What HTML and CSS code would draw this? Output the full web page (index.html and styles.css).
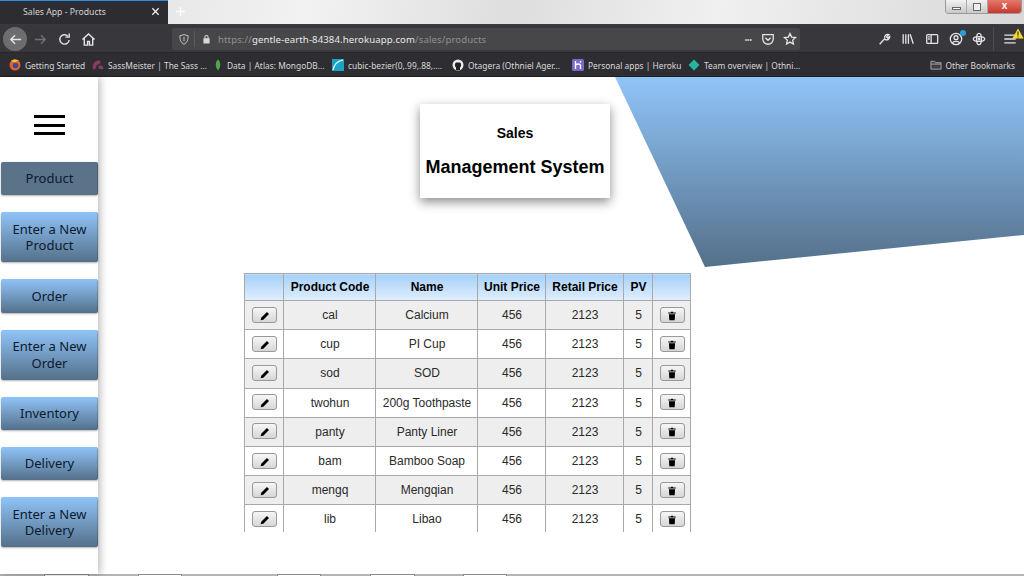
FILE: index.html
```html
<!DOCTYPE html>
<html lang="en">
<head>
<meta charset="utf-8">
<title>Sales App - Products</title>
<link rel="stylesheet" href="styles.css">
</head>
<body>
<svg class="defs" width="0" height="0">
  <symbol id="pencil" viewBox="0 0 12 12"><path d="M8.300 1.200l2.500 2.500-6.800 6.800L.8 11.200l.7-3.200z"/></symbol>
  <symbol id="trash" viewBox="0 0 12 12"><path d="M1.500 1.800h3l.5-.8h2l.5.8h3v1.300h-9zM2.300 3.800h7.400l-.5 7.400H2.800z"/></symbol>
</svg>
<header class="titlebar">
  <div class="tab"><span class="tab-title">Sales App - Products</span>
    <svg class="tab-close" viewBox="0 0 10 10"><path d="M1.500 1.500l7 7M8.500 1.500l-7 7"/></svg>
  </div>
  <svg class="new-tab" viewBox="0 0 12 12"><path d="M6 1v10M1 6h10"/></svg>
  <div class="win-controls">
    <span class="win-btn win-min"><i class="min-glyph"></i></span>
    <span class="win-btn win-max"><i class="max-glyph"></i></span>
    <span class="win-btn win-close">x</span>
  </div>
</header>
<nav class="toolbar">
  <span class="back"><svg viewBox="0 0 16 16" class="ico"><path d="M14 8H3M7.500 3.500L3 8l4.500 4.500"/></svg></span>
  <svg viewBox="0 0 16 16" class="ico ico-dim fwd"><path d="M2 8h11M8.500 3.500L13 8l-4.500 4.500"/></svg>
  <svg viewBox="0 0 16 16" class="ico reload"><path d="M13 8.500A5 5 0 1 1 11.500 4.300M13 1.500v4h-4"/></svg>
  <svg viewBox="0 0 16 16" class="ico home"><path d="M1.500 8L8 2l6.500 6M3.500 7v7h3.500v-4h2v4h3.500V7"/></svg>
  <div class="urlbar">
    <svg viewBox="0 0 16 16" class="ico shield"><path d="M8 1.500l5.500 1.500c0 5-1 9-5.500 11.500C3.500 12 2.500 8 2.500 3zM8 4.500v6"/></svg>
    <span class="url-sep"></span>
    <svg viewBox="0 0 16 16" class="lock"><path d="M5 7V5a3 3 0 0 1 6 0v2h1.500v7.500h-9V7zM6.500 7h3V5a1.500 1.500 0 0 0-3 0z" fill-rule="evenodd"/></svg>
    <span class="url"><span class="url-dim">https://</span>gentle-earth-84384.herokuapp.com<span class="url-dim">/sales/products</span></span>
    <span class="url-dots">•••</span>
    <svg viewBox="0 0 16 16" class="ico pocket"><path d="M2 3h12v5a6 6 0 0 1-12 0zM5 6.500l3 3 3-3"/></svg>
    <svg viewBox="0 0 16 16" class="ico star"><path d="M8 1.800l1.900 4 4.400.5-3.200 3 .8 4.400L8 11.500l-3.900 2.200.8-4.400-3.200-3 4.400-.5z"/></svg>
  </div>
  <div class="tools">
    <svg viewBox="0 0 16 16" class="ico wrench"><path d="M3 14l6-6.500M9 7.500c-1-3 1.500-5.500 4.500-4.500L11 5.500 12 7l2.500-2c.5 3-2.500 5-5.500 3.500"/></svg>
    <svg viewBox="0 0 16 16" class="ico library"><path d="M2.500 2.500v11M5.500 2.500v11M8.500 2.500v11M10.500 2.500l3.500 11"/></svg>
    <svg viewBox="0 0 16 16" class="ico sidebar-ico"><path d="M3 3h10.500a1 1 0 0 1 1 1v8a1 1 0 0 1-1 1H3a1 1 0 0 1-1-1V4a1 1 0 0 1 1-1zM7 3v10M3.500 5.500h2M3.500 8h2"/></svg>
    <span class="account">
      <svg viewBox="0 0 16 16" class="ico"><circle cx="8" cy="8" r="6.500"/><circle cx="8" cy="6.500" r="2.200"/><path d="M3.800 12.500c1-2.500 7.400-2.500 8.400 0"/></svg>
      <i class="badge-dot"></i>
    </span>
    <svg viewBox="0 0 16 16" class="ico atom"><ellipse cx="8" cy="8" rx="6.500" ry="2.800"/><ellipse cx="8" cy="8" rx="2.800" ry="6.500"/><circle cx="8" cy="8" r="1"/></svg>
    <span class="tool-sep"></span>
    <span class="menu">
      <svg viewBox="0 0 16 16" class="ico"><path d="M1.500 3.500h13M1.500 8h13M1.500 12.500h13"/></svg>
      <svg viewBox="0 0 12 11" class="warn"><path d="M6 .5L11.700 10.500H.3z"/><path class="warn-mark" d="M6 3.500v4M6 8.500v1"/></svg>
    </span>
  </div>
</nav>
<div class="bookmarks">
  <span class="bm"><svg viewBox="0 0 12 12" class="bm-ico"><circle cx="6" cy="6" r="5.500" fill="#e8622a"/><circle cx="6.500" cy="6.500" r="2.800" fill="#3a4a9c"/><path d="M2 2c2-2 6-2 8 0-2 0-3 .5-4 1.500z" fill="#fbbf2c"/></svg><span>Getting Started</span></span>
  <span class="bm"><svg viewBox="0 0 13 12" class="bm-ico"><path d="M1 11C0 5 3 1 7 1c2 0 3 2 1.500 3.500S5 5 4.500 8 3 11 1 11zM7 7c3-1 5 0 5.500 3-2 1-4 1-5.500-.5z" fill="#8d3a5f"/></svg><span>SassMeister | The Sass ...</span></span>
  <span class="bm"><svg viewBox="0 0 10 13" class="bm-ico bm-narrow"><path d="M5 .5C8 3 8.500 8 5 12.500 1.500 8 2 3 5 .5z" fill="#4fa845"/></svg><span>Data | Atlas: MongoDB...</span></span>
  <span class="bm"><svg viewBox="0 0 12 12" class="bm-ico"><rect width="12" height="12" fill="#1aa3c4"/><path d="M1 11C2 5 6 2 11 1" fill="none" stroke="#fff" stroke-width="1.200"/></svg><span>cubic-bezier(0,.99,.88,....</span></span>
  <span class="bm"><svg viewBox="0 0 12 12" class="bm-ico"><circle cx="6" cy="6" r="5.500" fill="#eee"/><path d="M4 11V8.500C2.500 7.500 2.500 4.500 4 3.500h4C9.500 4.500 9.500 7.500 8 8.500V11z" fill="#222"/></svg><span>Otagera (Othniel Ager...</span></span>
  <span class="bm"><svg viewBox="0 0 12 12" class="bm-ico"><rect width="12" height="12" rx="1.500" fill="#7b68c8"/><path d="M3.500 2v8M3.500 6c2-1.500 5-1.500 5 .5V10M8.500 2v1.500" fill="none" stroke="#fff" stroke-width="1.400"/></svg><span>Personal apps | Heroku</span></span>
  <span class="bm"><svg viewBox="0 0 12 12" class="bm-ico"><path d="M6 .5L11.500 6 6 11.500.5 6z" fill="#26b5a0"/></svg><span>Team overview | Othni...</span></span>
  <span class="bm bm-other"><svg viewBox="0 0 13 12" class="bm-ico folder"><path d="M1 10.500V2h4l1 1.500h6v7zM1 5h11"/></svg><span>Other Bookmarks</span></span>
</div>
<div class="page">
  <aside class="sidebar">
    <div class="burger"><i></i><i></i><i></i></div>
    <a class="nav-btn nav-active">Product</a>
    <a class="nav-btn nav-tall">Enter a New<br>Product</a>
    <a class="nav-btn">Order</a>
    <a class="nav-btn nav-tall">Enter a New<br>Order</a>
    <a class="nav-btn">Inventory</a>
    <a class="nav-btn">Delivery</a>
    <a class="nav-btn nav-tall">Enter a New<br>Delivery</a>
  </aside>
  <main class="content">
    <div class="wedge"></div>
    <section class="card">
      <h2>Sales</h2>
      <h1>Management System</h1>
    </section>
    <div class="table-wrap">
      <table class="products">
        <thead>
          <tr><th class="c-edit"></th><th class="c-code">Product Code</th><th class="c-name">Name</th><th class="c-unit">Unit Price</th><th class="c-retail">Retail Price</th><th class="c-pv">PV</th><th class="c-del"></th></tr>
        </thead>
        <tbody>
          <tr><td><button class="act-btn"><svg class="act"><use href="#pencil"/></svg></button></td><td>cal</td><td>Calcium</td><td>456</td><td>2123</td><td>5</td><td><button class="act-btn"><svg class="act"><use href="#trash"/></svg></button></td></tr>
          <tr><td><button class="act-btn"><svg class="act"><use href="#pencil"/></svg></button></td><td>cup</td><td>PI Cup</td><td>456</td><td>2123</td><td>5</td><td><button class="act-btn"><svg class="act"><use href="#trash"/></svg></button></td></tr>
          <tr><td><button class="act-btn"><svg class="act"><use href="#pencil"/></svg></button></td><td>sod</td><td>SOD</td><td>456</td><td>2123</td><td>5</td><td><button class="act-btn"><svg class="act"><use href="#trash"/></svg></button></td></tr>
          <tr><td><button class="act-btn"><svg class="act"><use href="#pencil"/></svg></button></td><td>twohun</td><td>200g Toothpaste</td><td>456</td><td>2123</td><td>5</td><td><button class="act-btn"><svg class="act"><use href="#trash"/></svg></button></td></tr>
          <tr><td><button class="act-btn"><svg class="act"><use href="#pencil"/></svg></button></td><td>panty</td><td>Panty Liner</td><td>456</td><td>2123</td><td>5</td><td><button class="act-btn"><svg class="act"><use href="#trash"/></svg></button></td></tr>
          <tr><td><button class="act-btn"><svg class="act"><use href="#pencil"/></svg></button></td><td>bam</td><td>Bamboo Soap</td><td>456</td><td>2123</td><td>5</td><td><button class="act-btn"><svg class="act"><use href="#trash"/></svg></button></td></tr>
          <tr><td><button class="act-btn"><svg class="act"><use href="#pencil"/></svg></button></td><td>mengq</td><td>Mengqian</td><td>456</td><td>2123</td><td>5</td><td><button class="act-btn"><svg class="act"><use href="#trash"/></svg></button></td></tr>
          <tr><td><button class="act-btn"><svg class="act"><use href="#pencil"/></svg></button></td><td>lib</td><td>Libao</td><td>456</td><td>2123</td><td>5</td><td><button class="act-btn"><svg class="act"><use href="#trash"/></svg></button></td></tr>
        </tbody>
      </table>
    </div>
  </main>
</div>
<div class="strip"><i class="s1"></i><i class="s2"></i><i class="s3"></i><i class="s4"></i><i class="s5"></i></div>
</body>
</html>
```

FILE: styles.css
```css
* { box-sizing: border-box; }
html, body { margin: 0; height: 100%; overflow: hidden; }
body {
  display: flex; flex-direction: column; height: 576px; width: 1024px;
  font-family: "Liberation Sans", Arial, sans-serif; background: #fff; color: #000;
}
.defs { position: absolute; }
/* title bar */
.titlebar {
  height: 25px; flex: none; display: flex; align-items: flex-start; position: relative;
  background: linear-gradient(100deg, #dcdcdc 0%, #f2f2f2 30%, #dedede 50%, #f0f0f0 70%, #d8d8d8 100%);
  border-bottom: 1px solid #3a3a3c;
}
.tab {
  width: 168px; height: 24px; background: #2d2c30; border-top: 1px solid #2f8fe6;
  display: flex; align-items: center; padding: 0 8px 2px 23px; justify-content: space-between;
}
.tab-title { font: 8.700px "Noto Sans", sans-serif; color: #d4d4d6; }
.tab-close { width: 9px; height: 9px; fill: none; stroke: #e8e8e8; stroke-width: 1.500; }
.new-tab { width: 11px; height: 11px; margin: 6px 0 0 7px; fill: none; stroke: #fff; stroke-width: 1.500; }
.win-controls {
  position: absolute; right: 2px; top: 0; width: 77px; height: 14px; display: flex;
  border: 1px solid #9a9a9a; border-top: 0; border-radius: 0 0 4px 4px; overflow: hidden;
}
.win-btn { display: flex; align-items: center; justify-content: center; height: 100%; }
.win-min, .win-max { width: 21px; background: linear-gradient(#f2f2f2, #c9c9c9); border-right: 1px solid #a8a8a8; }
.win-close { flex: 1; background: linear-gradient(#e4786a, #c8392c); color: #fff; font: bold 10px "Liberation Sans", sans-serif; padding-bottom: 2px; }
.min-glyph { width: 9px; height: 3px; background: #fff; border: 1px solid #666; margin-top: 4px; }
.max-glyph { width: 8px; height: 8px; border: 1px solid #666; background: #eee; }

/* toolbar */
.toolbar {
  height: 28px; flex: none; background: #38383c; display: flex; align-items: center;
  padding: 1px 0 0 3px; border-bottom: 1px solid #28282a;
}
.ico { width: 15px; height: 15px; fill: none; stroke: #e4e4e6; stroke-width: 1.500; flex: none; }
.ico-dim { stroke: #717174; }
.back {
  width: 24px; height: 24px; border-radius: 50%; background: #6d6d70; flex: none;
  display: flex; align-items: center; justify-content: center;
}
.fwd { margin-left: 6px; }
.reload { margin-left: 9px; }
.home { margin-left: 8.500px; }
.urlbar {
  width: 628px; height: 22px; margin-left: 76.500px; background: #474749; flex: none;
  display: flex; align-items: center; padding-left: 6px; border-radius: 2px;
}
.shield { width: 12px; height: 13px; stroke: #c8c8ca; stroke-width: 1.300; }
.url-sep { width: 1px; height: 16px; background: #5c5c5e; margin: 0 6px 0 4px; }
.lock { width: 11px; height: 12px; fill: #d8d8da; flex: none; }
.url { font: 9.600px "Noto Sans", sans-serif; color: #e6e6e8; margin-left: 6px; white-space: nowrap; letter-spacing: .1px; padding-top: 1px; }
.url-dim { color: #8f8f92; }
.url-dots { margin-left: auto; font: 7px "Liberation Sans", sans-serif; color: #c8c8ca; }
.pocket { margin-left: 9px; width: 14px; height: 14px; }
.star { margin: 0 3px 0 8px; width: 14px; height: 14px; }
.tools { display: flex; align-items: center; margin-left: 77px; height: 100%; }
.tools .ico { width: 14px; height: 14px; }
.library, .sidebar-ico, .account { margin-left: 10px; }
.atom { margin-left: 9px; }
.account { position: relative; display: flex; }
.badge-dot { position: absolute; right: -3px; top: -2px; width: 6px; height: 6px; border-radius: 50%; background: #2a9fd8; }
.tool-sep { width: 1px; height: 24px; background: #4d4d50; margin: 0 9px 0 7px; }
.menu { position: relative; display: flex; }
.warn { position: absolute; width: 12px; height: 11px; right: -7px; top: -4px; fill: #fbd92b; }
.warn-mark { fill: none; stroke: #333; stroke-width: 1.200; }

/* bookmarks */
.bookmarks {
  height: 24px; flex: none; background: #2e2d31; display: grid; padding: 1px 0 0 9px;
  grid-template-columns: 83px 121px 119px 120px 120px 116px 1fr auto; align-items: center;
  font: 8.400px "Noto Sans", sans-serif; color: #d8d8da; border-bottom: 1px solid #1f1f21;
}
.bm { display: flex; align-items: center; gap: 4px; white-space: nowrap; }
.bm-ico { width: 12px; height: 12px; flex: none; }
.bm-narrow { width: 10px; }
.bm-other { padding-right: 9px; gap: 3px; }
.folder { fill: #3e3d42; stroke: #b8b8ba; stroke-width: .9; }

/* page */
.page { flex: 1; display: flex; min-height: 0; background: #fff; }
.sidebar {
  width: 98px; flex: none; background: #fff; padding-left: 1px; display: flex; flex-direction: column;
  box-shadow: 2px 0 8px rgba(0, 0, 0, .28); position: relative; z-index: 2;
}
.burger { height: 85px; padding: 38px 0 0 33px; display: flex; flex-direction: column; gap: 5.500px; flex: none; }
.burger i { display: block; width: 31px; height: 3px; background: #000; }
.nav-btn {
  display: flex; align-items: center; justify-content: center; text-align: center; flex: none;
  height: 33.300px; margin-bottom: 17px; border-radius: 2px; font: 13px/16.500px "Noto Sans", sans-serif; color: #0b1a30;
  background: linear-gradient(#90c4f8, #54708a); box-shadow: 0 1px 2px rgba(0, 0, 0, .3), inset -1px 0 1px rgba(0, 0, 0, .15);
}
.nav-tall { height: 50px; }
.nav-active { background: #5a7389; }

/* main */
.content { flex: 1; position: relative; padding: 27px 0 0 146px; overflow: hidden; }
.wedge {
  position: absolute; left: 517px; top: 0; width: 409px; height: 190px;
  background: linear-gradient(#90c4f8, #54708a);
  clip-path: polygon(0 0, 100% 0, 100% 158px, 90px 100%);
}
.card {
  position: relative; margin-left: 176px; width: 190px; height: 94px; background: #fff; text-align: center;
  box-shadow: 0 4px 10px rgba(0, 0, 0, .45); padding-top: 21px; font-weight: bold;
}
.card h2 { margin: 0; font-size: 14px; line-height: 16px; }
.card h1 { margin: 16px 0 0; font-size: 18px; line-height: 21px; }
.table-wrap { position: relative; margin-top: 75px; width: 447px; height: 259px; overflow: hidden; }
.products { border-collapse: collapse; table-layout: fixed; width: 446px; margin-left: -.5px; font-size: 12px; }
.products th, .products td { border: 1px solid #a9a9a9; text-align: center; padding: 0 0 0 2px; color: #2a2a2a; }
.products thead tr { height: 27px; }
.products th { font-weight: bold; color: #000; background: linear-gradient(#a6d0fa, #e0eefd); }
.products tbody tr { height: 29.200px; }
.products tbody tr:nth-child(odd) { background: #eee; }
.c-edit { width: 39px; } .c-code { width: 92px; } .c-name { width: 102px; } .c-unit { width: 68px; }
.c-retail { width: 78px; } .c-pv { width: 29px; } .c-del { width: 38px; }
.act-btn {
  width: 25px; height: 16px; padding: 0; border: 1px solid #999; border-radius: 3px; display: block; margin: -1px auto 0;
  background: linear-gradient(#f6f6f6, #d6d6d6);
}
.act { width: 10px; height: 10px; fill: #000; display: block; margin: 2px auto 0; }

/* bottom strip */
.strip { height: 2px; flex: none; background: #b5b5b5; position: relative; }
.strip i { position: absolute; top: 0; height: 2px; background: #fff; border: 1px solid #8a8a8a; border-bottom: 0; }
.s1 { left: 44px; width: 45px; } .s2 { left: 138px; width: 44px; } .s3 { left: 277px; width: 44px; }
.s4 { left: 370px; width: 45px; } .s5 { left: 463px; width: 44px; }
```
